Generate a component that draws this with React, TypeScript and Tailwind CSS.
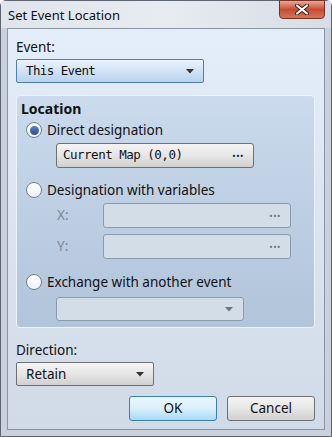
import React from "react";

const ui = { fontFamily: '"Noto Sans", "DejaVu Sans", sans-serif' };
const mono = { fontFamily: '"DejaVu Sans Mono", "Liberation Mono", monospace' };

const Arrow = ({ color = "#333" }: { color?: string }) => (
  <svg width="8" height="5" viewBox="0 0 8 5">
    <path d="M0 0 H8 L4 4.5 Z" fill={color} />
  </svg>
);

const Radio = ({ checked, label }: { checked?: boolean; label: string }) => (
  <div className="flex items-center h-[18px]">
    <div className="ml-[9px] w-[16px] h-[16px] rounded-full border border-[#6f7f90] bg-gradient-to-b from-[#ffffff] to-[#eef2f6] flex items-center justify-center">
      {checked && <div className="w-[9px] h-[9px] rounded-full bg-gradient-to-b from-[#5b7cc4] to-[#2f4f99]" />}
    </div>
    <span className="ml-[5px] text-[13.5px] text-[#111]">{label}</span>
  </div>
);

const Field = () => (
  <div className="ml-[29px] w-[188px] h-[25px] rounded-[3px] border border-[#8b9aad] bg-[#d3dde8] flex items-center justify-end pr-[9px]">
    <span className="text-[9px] tracking-[0.5px] text-[#6b7582] leading-none">•••</span>
  </div>
);

export default function App() {
  return (
    <div className="w-[332px] h-[437px] bg-[#c9d2dc] border border-[#5d6670] rounded-t-[6px] flex flex-col" style={ui}>
      <div className="h-[27px] flex items-start justify-between bg-gradient-to-r from-[#dfe5ec] via-[#e8ecf1] to-[#d6dde5]">
        <span className="ml-[7px] mt-[5px] text-[13px] text-[#111]">Set Event Location</span>
        <div className="mr-[6px] w-[46px] h-[19px] -mt-px rounded-b-[4px] border border-[#7c2f24] bg-gradient-to-b from-[#e6a898] via-[#c94a33] to-[#d27559] flex items-center justify-center">
          <svg width="14" height="11" viewBox="0 0 14 11">
            <path d="M2 1.5 L12 9.5 M12 1.5 L2 9.5" stroke="#3c1d18" strokeWidth="4" strokeLinecap="round" />
            <path d="M2 1.5 L12 9.5 M12 1.5 L2 9.5" stroke="#ffffff" strokeWidth="2.2" strokeLinecap="round" />
          </svg>
        </div>
      </div>
      <div className="mx-[6px] flex-1 mb-[6px] border border-[#8a96a3] bg-gradient-to-b from-[#e4eefb] to-[#d0dbe7] flex flex-col">
        <span className="ml-[8px] mt-[10px] text-[13.5px] leading-[16px] text-[#111]">Event:</span>
        <div className="ml-[8px] mt-[4px] w-[188px] h-[24px] rounded-[2px] border border-[#4f7fb3] bg-gradient-to-b from-[#eaf3fd] to-[#b8d2ee] flex items-center justify-between px-[9px]">
          <span className="text-[12.5px] tracking-[-0.6px] text-[#111]" style={mono}>This Event</span>
          <Arrow />
        </div>
        <div className="ml-[8px] mt-[12px] w-[299px] h-[233px] rounded-[4px] border border-[#edf3fa] bg-gradient-to-b from-[#cbdaed] to-[#b1c4da] flex flex-col">
          <span className="ml-[4px] mt-[4px] text-[14px] font-bold leading-[17px] text-[#111]">Location</span>
          <div className="mt-[4px]">
            <Radio checked label="Direct designation" />
          </div>
          <div className="ml-[39px] mt-[4px] w-[198px] h-[25px] rounded-[3px] border border-[#707070] bg-gradient-to-b from-[#f4f4f4] via-[#e6e6e6] to-[#d0d0d0] flex items-center justify-between px-[6px]">
            <span className="text-[12.5px] tracking-[-0.5px] text-[#111]" style={mono}>Current Map (0,0)</span>
            <span className="text-[9px] tracking-[0.5px] text-[#222] leading-none mr-[3px]">•••</span>
          </div>
          <div className="mt-[13px]">
            <Radio label="Designation with variables" />
          </div>
          <div className="mt-[4px] flex items-center">
            <span className="ml-[40px] w-[17px] text-[13.5px] text-[#7b8796]">X:</span>
            <Field />
          </div>
          <div className="mt-[6px] flex items-center">
            <span className="ml-[40px] w-[17px] text-[13.5px] text-[#7b8796]">Y:</span>
            <Field />
          </div>
          <div className="mt-[14px]">
            <Radio label="Exchange with another event" />
          </div>
          <div className="ml-[39px] mt-[6px] w-[188px] h-[24px] rounded-[3px] border border-[#8b9aad] bg-[#d3dde8] flex items-center justify-end pr-[10px]">
            <Arrow color="#6b7582" />
          </div>
        </div>
        <span className="ml-[8px] mt-[14px] text-[13.5px] leading-[16px] text-[#111]">Direction:</span>
        <div className="ml-[8px] mt-[4px] w-[138px] h-[24px] rounded-[2px] border border-[#707070] bg-gradient-to-b from-[#f4f4f4] via-[#e6e6e6] to-[#d0d0d0] flex items-center justify-between px-[9px]">
          <span className="text-[13.5px] text-[#111]">Retain</span>
          <Arrow />
        </div>
        <div className="mt-[10px] flex justify-end gap-[10px] mr-[9px]">
          <div className="w-[88px] h-[25px] rounded-[3px] border border-[#3c7fb1] bg-gradient-to-b from-[#eaf6fd] via-[#d9f0fc] to-[#a7d9f5] flex items-center justify-center">
            <span className="text-[13.5px] text-[#111]">OK</span>
          </div>
          <div className="w-[88px] h-[25px] rounded-[3px] border border-[#707070] bg-gradient-to-b from-[#f4f4f4] via-[#e6e6e6] to-[#d0d0d0] flex items-center justify-center">
            <span className="text-[13.5px] text-[#111]">Cancel</span>
          </div>
        </div>
      </div>
    </div>
  );
}
